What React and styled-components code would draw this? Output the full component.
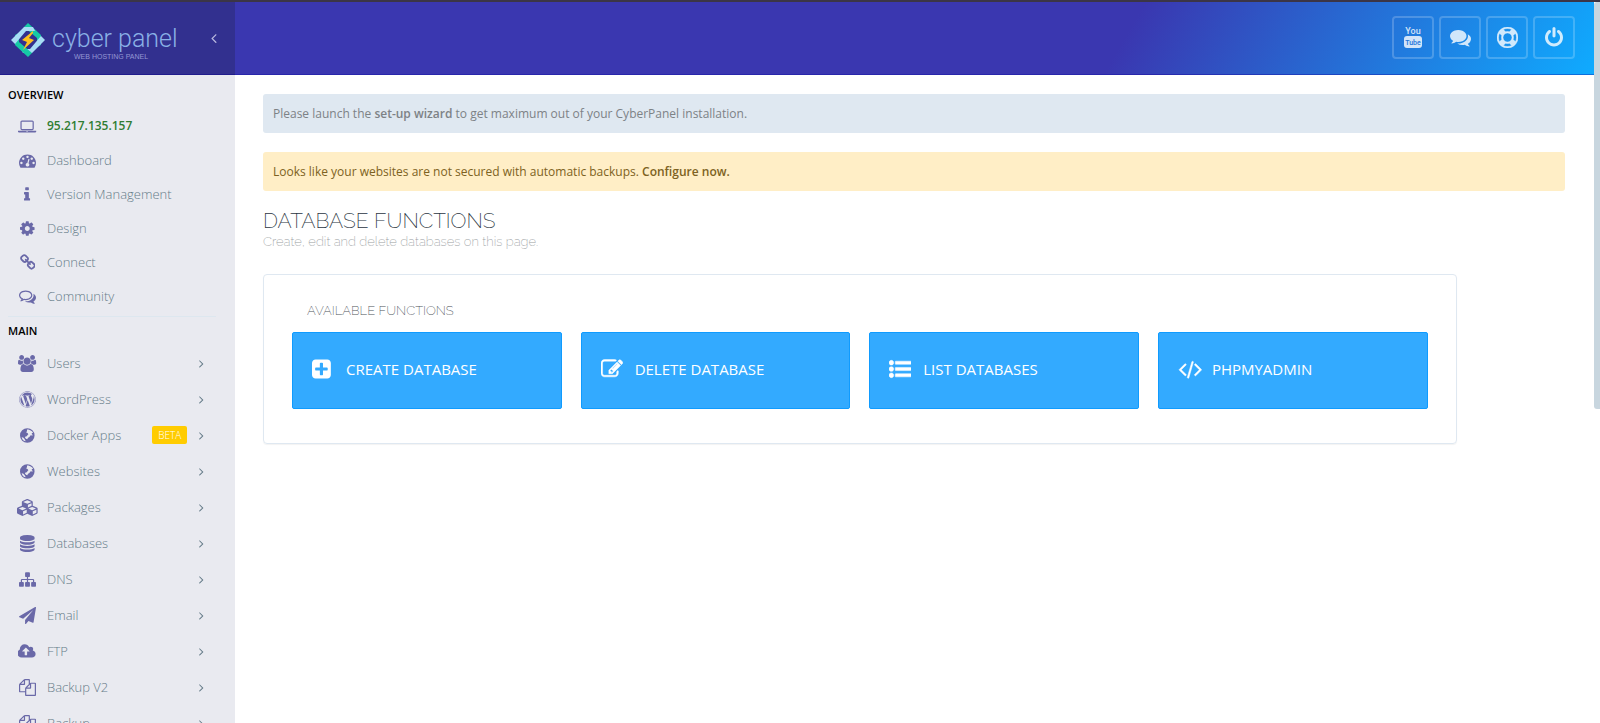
/** @format */

import React from "react";
import styled, { createGlobalStyle } from "styled-components";
import { FaWordpress } from "react-icons/fa";

// [min x, width, path], all glyphs are 1792 units high
const glyphs = {
	laptop: [
		0,
		1920,
		"M416 1280q-66 0-113-47t-47-113v-704q0-66 47-113t113-47h1088q66 0 113 47t47 113v704q0 66-47 113t-113 47h-1088zm-32-864v704q0 13 9.5 22.5t22.5 9.5h1088q13 0 22.5-9.5t9.5-22.5v-704q0-13-9.5-22.5t-22.5-9.5h-1088q-13 0-22.5 9.5t-9.5 22.5zm1376 928h160v96q0 40-47 68t-113 28h-1600q-66 0-113-28t-47-68v-96h1760zm-720 96q16 0 16-16t-16-16h-160q-16 0-16 16t16 16h160z",
	],
	dashboard: [
		0,
		1792,
		"M384 1152q0-53-37.5-90.5t-90.5-37.5-90.5 37.5-37.5 90.5 37.5 90.5 90.5 37.5 90.5-37.5 37.5-90.5zm192-448q0-53-37.5-90.5t-90.5-37.5-90.5 37.5-37.5 90.5 37.5 90.5 90.5 37.5 90.5-37.5 37.5-90.5zm428 481l101-382q6-26-7.5-48.5t-38.5-29.5-48 6.5-30 39.5l-101 382q-60 5-107 43.5t-63 98.5q-20 77 20 146t117 89 146-20 89-117q16-60-6-117t-72-91zm660-33q0-53-37.5-90.5t-90.5-37.5-90.5 37.5-37.5 90.5 37.5 90.5 90.5 37.5 90.5-37.5 37.5-90.5zm-640-640q0-53-37.5-90.5t-90.5-37.5-90.5 37.5-37.5 90.5 37.5 90.5 90.5 37.5 90.5-37.5 37.5-90.5zm448 192q0-53-37.5-90.5t-90.5-37.5-90.5 37.5-37.5 90.5 37.5 90.5 90.5 37.5 90.5-37.5 37.5-90.5zm320 448q0 261-141 483-19 29-54 29h-1402q-35 0-54-29-141-221-141-483 0-182 71-348t191-286 286-191 348-71 348 71 286 191 191 286 71 348z",
	],
	info: [
		576,
		640,
		"M1216 1344v128q0 26-19 45t-45 19h-512q-26 0-45-19t-19-45v-128q0-26 19-45t45-19h64v-384h-64q-26 0-45-19t-19-45v-128q0-26 19-45t45-19h384q26 0 45 19t19 45v576h64q26 0 45 19t19 45zm-128-1152v192q0 26-19 45t-45 19h-256q-26 0-45-19t-19-45v-192q0-26 19-45t45-19h256q26 0 45 19t19 45z",
	],
	cog: [
		128,
		1536,
		"M1152 896q0-106-75-181t-181-75-181 75-75 181 75 181 181 75 181-75 75-181zm512-109v222q0 12-8 23t-20 13l-185 28q-19 54-39 91 35 50 107 138 10 12 10 25t-9 23q-27 37-99 108t-94 71q-12 0-26-9l-138-108q-44 23-91 38-16 136-29 186-7 28-36 28h-222q-14 0-24.5-8.5t-11.5-21.5l-28-184q-49-16-90-37l-141 107q-10 9-25 9-14 0-25-11-126-114-165-168-7-10-7-23 0-12 8-23 15-21 51-66.5t54-70.5q-27-50-41-99l-183-27q-13-2-21-12.5t-8-23.5v-222q0-12 8-23t19-13l186-28q14-46 39-92-40-57-107-138-10-12-10-24 0-10 9-23 26-36 98.5-107.5t94.5-71.5q13 0 26 10l138 107q44-23 91-38 16-136 29-186 7-28 36-28h222q14 0 24.5 8.5t11.5 21.5l28 184q49 16 90 37l142-107q9-9 24-9 13 0 25 10 129 119 165 170 7 8 7 22 0 12-8 23-15 21-51 66.5t-54 70.5q26 50 41 98l183 28q13 2 21 12.5t8 23.5z",
	],
	chain: [
		64,
		1664,
		"M1520 1216q0-40-28-68l-208-208q-28-28-68-28-42 0-72 32 3 3 19 18.5t21.5 21.5 15 19 13 25.5 3.5 27.5q0 40-28 68t-68 28q-15 0-27.5-3.5t-25.5-13-19-15-21.5-21.5-18.5-19q-33 31-33 73 0 40 28 68l206 207q27 27 68 27 40 0 68-26l147-146q28-28 28-67zm-703-705q0-40-28-68l-206-207q-28-28-68-28-39 0-68 27l-147 146q-28 28-28 67 0 40 28 68l208 208q27 27 68 27 42 0 72-31-3-3-19-18.5t-21.5-21.5-15-19-13-25.5-3.5-27.5q0-40 28-68t68-28q15 0 27.5 3.5t25.5 13 19 15 21.5 21.5 18.5 19q33-31 33-73zm895 705q0 120-85 203l-147 146q-83 83-203 83-121 0-204-85l-206-207q-83-83-83-203 0-123 88-209l-88-88q-86 88-208 88-120 0-204-84l-208-208q-84-84-84-204t85-203l147-146q83-83 203-83 121 0 204 85l206 207q83 83 83 203 0 123-88 209l88 88q86-88 208-88 120 0 204 84l208 208q84 84 84 204z",
	],
	commentsO: [
		0,
		1792,
		"M704 384q-153 0-286 52t-211.5 141-78.5 191q0 82 53 158t149 132l97 56-35 84q34-20 62-39l44-31 53 10q78 14 153 14 153 0 286-52t211.5-141 78.5-191-78.5-191-211.5-141-286-52zm0-128q191 0 353.5 68.5t256.5 186.5 94 257-94 257-256.5 186.5-353.5 68.5q-86 0-176-16-124 88-278 128-36 9-86 16h-3q-11 0-20.5-8t-11.5-21q-1-3-1-6.5t.5-6.5 2-6l2.5-5 3.5-5.5 4-5 4.5-5 4-4.5q5-6 23-25t26-29.5 22.5-29 25-38.5 20.5-44q-124-72-195-177t-71-224q0-139 94-257t256.5-186.5 353.5-68.5zm822 1169q10 24 20.5 44t25 38.5 22.5 29 26 29.5 23 25q1 1 4 4.5t4.5 5 4 5 3.5 5.5l2.5 5 2 6 .5 6.5-1 6.5q-3 14-13 22t-22 7q-50-7-86-16-154-40-278-128-90 16-176 16-271 0-472-132 58 4 88 4 161 0 309-45t264-129q125-92 192-212t67-254q0-77-23-152 129 71 204 178t75 230q0 120-71 224.5t-195 176.5z",
	],
	comments: [
		0,
		1792,
		"M1408 768q0 139-94 257t-256.5 186.5-353.5 68.5q-86 0-176-16-124 88-278 128-36 9-86 16h-3q-11 0-20.5-8t-11.5-21q-1-3-1-6.5t.5-6.5 2-6l2.5-5 3.5-5.5 4-5 4.5-5 4-4.5q5-6 23-25t26-29.5 22.5-29 25-38.5 20.5-44q-124-72-195-177t-71-224q0-139 94-257t256.5-186.5 353.5-68.5 353.5 68.5 256.5 186.5 94 257zm384 256q0 120-71 224.5t-195 176.5q10 24 20.5 44t25 38.5 22.5 29 26 29.5 23 25q1 1 4 4.5t4.5 5 4 5 3.5 5.5l2.5 5 2 6 .5 6.5-1 6.5q-3 14-13 22t-22 7q-50-7-86-16-154-40-278-128-90 16-176 16-271 0-472-132 58 4 88 4 161 0 309-45t264-129q125-92 192-212t67-254q0-77-23-152 129 71 204 178t75 230z",
	],
	users: [
		0,
		1920,
		"M593 896q-162 5-265 128h-134q-82 0-138-40.5t-56-118.5q0-353 124-353 6 0 43.5 21t97.5 42.5 119 21.5q67 0 133-23-5 37-5 66 0 143 81 256zm1071 637q0 120-73 189.5t-194 69.5h-874q-121 0-194-69.5t-73-189.5q0-53 3.5-103.5t14-109 26.5-108.5 43-97.5 62-81 85.5-53.5 111.5-20q10 0 43 21.5t73 48 107 48 135 21.5 135-21.5 107-48 73-48 43-21.5q61 0 111.5 20t85.5 53.5 62 81 43 97.5 26.5 108.5 14 109 3.5 103.5zm-1024-1277q0 106-75 181t-181 75-181-75-75-181 75-181 181-75 181 75 75 181zm704 384q0 159-112.5 271.5t-271.5 112.5-271.5-112.5-112.5-271.5 112.5-271.5 271.5-112.5 271.5 112.5 112.5 271.5zm576 225q0 78-56 118.5t-138 40.5h-134q-103-123-265-128 81-113 81-256 0-29-5-66 66 23 133 23 59 0 119-21.5t97.5-42.5 43.5-21q124 0 124 353zm-128-609q0 106-75 181t-181 75-181-75-75-181 75-181 181-75 181 75 75 181z",
	],
	globe: [
		128,
		1536,
		"M896 128a768 768 0 1 0 0 1536a768 768 0 1 0 0-1536zM860 250l150 20 200 60 210 140 90 170-110-20-50 110 110 90-30 110-130-60-110 40-60 140-150 90-90 150-130-40-110-150 60-110 130-20 90-120 80-90-90-130-140-40 90-160zM300 1080l150 40 140 110 120 210-20 60-160-60-150-160z",
	],
	cubes: [
		0,
		2304,
		"M640 1632l384-192v-314l-384 164v342zm-64-454l404-173-404-173-404 173zm1088 454l384-192v-314l-384 164v342zm-64-454l404-173-404-173-404 173zm-448-293l384-165v-266l-384 164v267zm-64-379l441-189-441-189-441 189zm1088 518v416q0 36-19 67t-52 47l-448 224q-25 14-57 14t-57-14l-448-224q-4-2-7-4-2 2-7 4l-448 224q-25 14-57 14t-57-14l-448-224q-33-16-52-47t-19-67v-416q0-38 21.5-70t56.5-48l434-186v-400q0-38 21.5-70t56.5-48l448-192q23-10 50-10t50 10l448 192q35 16 56.5 48t21.5 70v400l434 186q36 16 57 48t21 70z",
	],
	database: [
		128,
		1536,
		"M896 768q237 0 443-43t325-127v170q0 69-103 128t-280 93.5-385 34.5-385-34.5-280-93.5-103-128v-170q119 84 325 127t443 43zm0 768q237 0 443-43t325-127v170q0 69-103 128t-280 93.5-385 34.5-385-34.5-280-93.5-103-128v-170q119 84 325 127t443 43zm0-384q237 0 443-43t325-127v170q0 69-103 128t-280 93.5-385 34.5-385-34.5-280-93.5-103-128v-170q119 84 325 127t443 43zm0-1152q208 0 385 34.5t280 93.5 103 128v128q0 69-103 128t-280 93.5-385 34.5-385-34.5-280-93.5-103-128v-128q0-69 103-128t280-93.5 385-34.5z",
	],
	sitemap: [
		0,
		1792,
		"M1792 1248v320q0 40-28 68t-68 28h-320q-40 0-68-28t-28-68v-320q0-40 28-68t68-28h96v-192h-512v192h96q40 0 68 28t28 68v320q0 40-28 68t-68 28h-320q-40 0-68-28t-28-68v-320q0-40 28-68t68-28h96v-192h-512v192h96q40 0 68 28t28 68v320q0 40-28 68t-68 28h-320q-40 0-68-28t-28-68v-320q0-40 28-68t68-28h96v-192q0-52 38-90t90-38h512v-192h-96q-40 0-68-28t-28-68v-320q0-40 28-68t68-28h320q40 0 68 28t28 68v320q0 40-28 68t-68 28h-96v192h512q52 0 90 38t38 90v192h96q40 0 68 28t28 68z",
	],
	plane: [
		0,
		1792,
		"M1764 11q33 24 27 64l-256 1536q-5 29-32 45-14 8-31 8-11 0-24-5l-453-185-242 295q-18 23-49 23-13 0-22-4-19-7-30.5-23.5t-11.5-36.5v-349l864-1059-1069 925-395-162q-37-14-40-55-2-40 32-59l1664-960q15-9 32-9 20 0 36 11z",
	],
	cloud: [
		0,
		1920,
		"M1216 864q0-14-9-23l-352-352q-9-9-23-9t-23 9l-351 351q-10 12-10 24 0 14 9 23t23 9h224v352q0 13 9.5 22.5t22.5 9.5h192q13 0 22.5-9.5t9.5-22.5v-352h224q13 0 22.5-9.5t9.5-22.5zm640 288q0 159-112.5 271.5t-271.5 112.5h-1088q-185 0-316.5-131.5t-131.5-316.5q0-130 70-240t188-165q-2-30-2-43 0-212 150-362t362-150q156 0 285.5 87t188.5 231q71-62 166-62 106 0 181 75t75 181q0 76-41 138 130 31 213.5 135.5t83.5 238.5z",
	],
	files: [
		0,
		1792,
		"M1696 384q40 0 68 28t28 68v1216q0 40-28 68t-68 28h-960q-40 0-68-28t-28-68v-288h-544q-40 0-68-28t-28-68v-672q0-40 20-88t48-76l408-408q28-28 76-48t88-20h416q40 0 68 28t28 68v328q68-40 128-40h416zm-544 213l-299 299h299v-299zm-640-384l-299 299h299v-299zm196 647l316-316v-416h-384v416q0 40-28 68t-68 28h-416v640h512v-256q0-40 20-88t48-76zm956 804v-1152h-384v416q0 40-28 68t-68 28h-416v640h896z",
	],
	angle: [
		0,
		640,
		"M595 960q0 13-10 23l-466 466q-10 10-23 10t-23-10l-50-50q-10-10-10-23t10-23l393-393-393-393q-10-10-10-23t10-23l50-50q10-10 23-10t23 10l466 466q10 10 10 23z",
	],
	angleLeft: [
		0,
		640,
		"M45 960q0 13 10 23l466 466q10 10 23 10t23-10l50-50q10-10 10-23t-10-23l-393-393 393-393q10-10 10-23t-10-23l-50-50q-10-10-23-10t-23 10l-466 466q-10 10-10 23z",
	],
	ring: [
		0,
		1792,
		"M896 0q182 0 348 71t286 191 191 286 71 348-71 348-191 286-286 191-348 71-348-71-286-191-191-286-71-348 71-348 191-286 286-191 348-71zm0 128q-190 0-361 90l194 194q82-28 167-28t167 28l194-194q-171-90-361-90zm-678 1129l194-194q-28-82-28-167t28-167l-194-194q-90 171-90 361t90 361zm678 407q190 0 361-90l-194-194q-82 28-167 28t-167-28l-194 194q171 90 361 90zm0-384q159 0 271.5-112.5t112.5-271.5-112.5-271.5-271.5-112.5-271.5 112.5-112.5 271.5 112.5 271.5 271.5 112.5zm484-217l194 194q90-171 90-361t-90-361l-194 194q28 82 28 167t-28 167z",
	],
	power: [
		128,
		1536,
		"M1664 896q0 156-61 298t-164 245-245 164-298 61-298-61-245-164-164-245-61-298q0-182 80.5-343t226.5-270q43-32 95.5-25t83.5 50q32 42 24.5 94.5t-49.5 84.5q-98 74-151.5 181t-53.5 228q0 104 40.5 198.5t109.5 163.5 163.5 109.5 198.5 40.5 198.5-40.5 163.5-109.5 109.5-163.5 40.5-198.5q0-121-53.5-228t-151.5-181q-42-32-49.5-84.5t24.5-94.5q31-43 84-50t95 25q146 109 226.5 270t80.5 343zm-640-768v640q0 52-38 90t-90 38-90-38-38-90v-640q0-52 38-90t90-38 90 38 38 90z",
	],
	plus: [
		128,
		1536,
		"M1408 960v-128q0-26-19-45t-45-19h-320v-320q0-26-19-45t-45-19h-128q-26 0-45 19t-19 45v320h-320q-26 0-45 19t-19 45v128q0 26 19 45t45 19h320v320q0 26 19 45t45 19h128q26 0 45-19t19-45v-320h320q26 0 45-19t19-45zm256-544v960q0 119-84.5 203.5t-203.5 84.5h-960q-119 0-203.5-84.5t-84.5-203.5v-960q0-119 84.5-203.5t203.5-84.5h960q119 0 203.5 84.5t84.5 203.5z",
	],
	edit: [
		0,
		1792,
		"M888 1184l116-116-152-152-116 116v56h96v96h56zm440-720q-16-16-33 1l-350 350q-17 17-1 33t33-1l350-350q17-17 1-33zm80 594v190q0 119-84.5 203.5t-203.5 84.5h-832q-119 0-203.5-84.5t-84.5-203.5v-832q0-119 84.5-203.5t203.5-84.5h832q63 0 117 25 15 7 18 23 3 17-9 29l-49 49q-14 14-32 8-23-6-45-6h-832q-66 0-113 47t-47 113v832q0 66 47 113t113 47h832q66 0 113-47t47-113v-126q0-13 9-22l64-64q15-15 35-7t20 29zm-96-738l288 288-672 672h-288v-288zm444 132l-92 92-288-288 92-92q28-28 68-28t68 28l152 152q28 28 28 68t-28 68z",
	],
	list: [
		0,
		1792,
		"M384 1408q0 80-56 136t-136 56-136-56-56-136 56-136 136-56 136 56 56 136zm0-512q0 80-56 136t-136 56-136-56-56-136 56-136 136-56 136 56 56 136zm1408 416v192q0 13-9.5 22.5t-22.5 9.5h-1216q-13 0-22.5-9.5t-9.5-22.5v-192q0-13 9.5-22.5t22.5-9.5h1216q13 0 22.5 9.5t9.5 22.5zm-1408-928q0 80-56 136t-136 56-136-56-56-136 56-136 136-56 136 56 56 136zm1408 416v192q0 13-9.5 22.5t-22.5 9.5h-1216q-13 0-22.5-9.5t-9.5-22.5v-192q0-13 9.5-22.5t22.5-9.5h1216q13 0 22.5 9.5t9.5 22.5zm0-512v192q0 13-9.5 22.5t-22.5 9.5h-1216q-13 0-22.5-9.5t-9.5-22.5v-192q0-13 9.5-22.5t22.5-9.5h1216q13 0 22.5 9.5t9.5 22.5z",
	],
	code: [
		-110,
		1960,
		"M553 1399l-50 50q-10 10-23 10t-23-10l-466-466q-10-10-10-23t10-23l466-466q10-10 23-10t23 10l50 50q10 10 10 23t-10 23l-393 393 393 393q10 10 10 23t-10 23zm591-1067l-373 1291q-4 13-15.5 19.5t-23.5 2.5l-62-17q-13-4-19.5-15.5t-2.5-24.5l373-1291q4-13 15.5-19.5t23.5-2.5l62 17q13 4 19.5 15.5t2.5 24.5zm657 651l-466 466q-10 10-23 10t-23-10l-50-50q-10-10-10-23t10-23l393-393-393-393q-10-10-10-23t10-23l50-50q10-10 23-10t23 10l466 466q10 10 10 23t-10 23z",
	],
};

const overviewLinks = [
	{ label: "95.217.135.157", icon: "laptop", server: true },
	{ label: "Dashboard", icon: "dashboard" },
	{ label: "Version Management", icon: "info" },
	{ label: "Design", icon: "cog" },
	{ label: "Connect", icon: "chain" },
	{ label: "Community", icon: "commentsO" },
];

const mainLinks = [
	{ label: "Users", icon: "users" },
	{ label: "WordPress", icon: "wordpress" },
	{ label: "Docker Apps", icon: "globe", badge: "BETA" },
	{ label: "Websites", icon: "globe" },
	{ label: "Packages", icon: "cubes" },
	{ label: "Databases", icon: "database" },
	{ label: "DNS", icon: "sitemap" },
	{ label: "Email", icon: "plane" },
	{ label: "FTP", icon: "cloud" },
	{ label: "Backup V2", icon: "files" },
	{ label: "Backup", icon: "files" },
];

const functions = [
	{ label: "Create Database", icon: "plus" },
	{ label: "Delete Database", icon: "edit" },
	{ label: "List Databases", icon: "list" },
	{ label: "PHPMyAdmin", icon: "code" },
];

const Icon = ({ name, size = 17, stroke = 0 }) => {
	if (name === "wordpress") {
		return <FaWordpress size={size} aria-hidden='true' />;
	}
	const [x, width, d] = glyphs[name];
	return (
		<svg
			width={(width / 1792) * size}
			height={size}
			viewBox={`${x} 0 ${width} 1792`}
			fill='currentColor'
			stroke='currentColor'
			strokeWidth={stroke}
			fillRule={name === "globe" ? "evenodd" : "nonzero"}
			aria-hidden='true'>
			<path d={d} />
		</svg>
	);
};

const YoutubeIcon = () => (
	<svg width='22' height='24' viewBox='0 0 22 24' aria-hidden='true'>
		<g fontFamily='Roboto, sans-serif' fontWeight='500' textAnchor='middle'>
			<text x='11' y='9' fontSize='9' fill='currentColor'>
				You
			</text>
			<rect x='2' y='11' width='18' height='12' rx='3' fill='currentColor' />
			<text x='11' y='20' fontSize='7' fill='#2074da'>
				Tube
			</text>
		</g>
	</svg>
);

const LogoMark = () => (
	<svg width='34' height='34' viewBox='0 0 34 34' aria-hidden='true'>
		<path fill='#16c9a6' d='M17 0l13 12v10l-4 2V15L13 4z' />
		<path fill='#a8dcf6' d='M34 17L21 30l-9 0-2-4h9L30 13z' />
		<path fill='#16c9a6' d='M17 34L4 22V12l4-2v9l13 11z' />
		<path fill='#a8dcf6' d='M0 17L13 4h9l2 4h-9L4 21z' />
		<path fill='#fdc01e' d='M22 8l-11 9 5 2-4 8 11-10-5-2 4-5z' />
	</svg>
);

const App = () => {
	return (
		<Page>
			<GlobalStyle />
			<TopStrip />
			<Shell>
				<Sidebar>
					<Brand>
						<BrandLink href='#home'>
							<LogoMark />
							<BrandText>
								<BrandName>cyber panel</BrandName>
								<BrandTag>WEB HOSTING PANEL</BrandTag>
							</BrandText>
						</BrandLink>
						<CollapseButton type='button' aria-label='Collapse menu'>
							<Icon name='angleLeft' size={16} />
						</CollapseButton>
					</Brand>
					<Nav>
						<NavHeader>Overview</NavHeader>
						<NavList>
							{overviewLinks.map((l) => (
								<li key={l.label}>
									<NavLink href='#overview' $height={34} $server={l.server}>
										<NavIcon>
											<Icon name={l.icon} />
										</NavIcon>
										<NavLabel>{l.label}</NavLabel>
									</NavLink>
								</li>
							))}
						</NavList>
						<Divider />
						<NavHeader>Main</NavHeader>
						<NavList>
							{mainLinks.map((l) => (
								<li key={l.label}>
									<NavLink href='#main' $height={36}>
										<NavIcon>
											<Icon name={l.icon} />
										</NavIcon>
										<NavLabel>{l.label}</NavLabel>
										{l.badge && <Badge>{l.badge}</Badge>}
										<Icon name='angle' size={13} />
									</NavLink>
								</li>
							))}
						</NavList>
					</Nav>
				</Sidebar>

				<Main>
					<Header>
						<HeaderButton type='button' aria-label='YouTube'>
							<YoutubeIcon />
						</HeaderButton>
						<HeaderButton type='button' aria-label='Forums'>
							<Icon name='comments' size={21} />
						</HeaderButton>
						<HeaderButton type='button' aria-label='Support'>
							<Icon name='ring' size={21} stroke={40} />
						</HeaderButton>
						<HeaderButton type='button' aria-label='Log out'>
							<Icon name='power' size={21} />
						</HeaderButton>
					</Header>
					<Content>
						<Alert $bg='#dfe8f1' $color='#7d8286'>
							Please launch the <AlertLink href='#wizard'>set-up wizard</AlertLink>{" "}
							to get maximum out of your CyberPanel installation.
						</Alert>
						<Alert $bg='#ffeec6' $color='#7d6222'>
							Looks like your websites are not secured with automatic backups.{" "}
							<AlertLink href='#backups'>Configure now.</AlertLink>
						</Alert>
						<PageTitle>Database Functions</PageTitle>
						<PageText>Create, edit and delete databases on this page.</PageText>
						<Panel>
							<PanelTitle>Available Functions</PanelTitle>
							<Tiles>
								{functions.map((f) => (
									<Tile key={f.label} href='#databases'>
										<TileIcon>
											<Icon name={f.icon} size={22} stroke={f.icon === "plus" ? 0 : 40} />
										</TileIcon>
										{f.label}
									</Tile>
								))}
							</Tiles>
						</Panel>
					</Content>
				</Main>
				<ScrollTrack>
					<ScrollThumb />
				</ScrollTrack>
			</Shell>
		</Page>
	);
};

export default App;

const GlobalStyle = createGlobalStyle`
	* {
		box-sizing: border-box;
	}

	body {
		margin: 0;
		background: #fff;
		font-family: "Open Sans", sans-serif;
		font-size: 13px;
		line-height: 20px;
	}
`;

const Page = styled.div`
	display: flex;
	flex-direction: column;
	height: 100vh;
	overflow: hidden;
`;

const TopStrip = styled.div`
	flex: none;
	height: 2px;
	background: #3b3547;
`;

const Shell = styled.div`
	display: flex;
	flex: 1;
	min-height: 0;
`;

const Sidebar = styled.aside`
	display: flex;
	flex-direction: column;
	flex: none;
	width: 235px;
	background: #e9eaf0;
`;

const Brand = styled.div`
	display: flex;
	flex: none;
	align-items: center;
	justify-content: space-between;
	height: 73px;
	padding: 0 14px 0 11px;
	background: #32308f;
	border-bottom: 1px solid #201c8c;
`;

const BrandLink = styled.a`
	display: flex;
	align-items: center;
	gap: 7px;
	padding-top: 4px;
	text-decoration: none;
`;

const BrandText = styled.span`
	display: flex;
	flex-direction: column;
	padding-top: 6px;
`;

const BrandName = styled.span`
	color: #8ab0e6;
	font-family: Roboto, sans-serif;
	font-size: 25px;
	font-weight: 300;
	line-height: 28px;
`;

const BrandTag = styled.span`
	padding-left: 22px;
	color: #9497d4;
	font-family: "Liberation Sans", sans-serif;
	font-size: 7px;
	line-height: 8px;
`;

const CollapseButton = styled.button`
	display: flex;
	padding: 4px;
	border: 0;
	background: none;
	color: #b9b8df;
	cursor: pointer;
`;

const Nav = styled.nav`
	flex: 1;
	min-height: 0;
	overflow: hidden;
	padding: 10px 19px 0 8px;
`;

const NavHeader = styled.h2`
	margin: 0;
	color: #000;
	font-size: 11px;
	font-weight: 600;
	line-height: 20px;
	text-transform: uppercase;
`;

const NavList = styled.ul`
	margin: 0;
	padding: 4px 0 0;
	list-style: none;
`;

const NavLink = styled.a`
	display: flex;
	align-items: center;
	height: ${(p) => p.$height}px;
	padding-right: 12px;
	color: ${(p) => (p.$server ? "#2f7d32" : "#667c89")};
	font-size: ${(p) => (p.$server ? 12 : 13)}px;
	font-weight: ${(p) => (p.$server ? 600 : 300)};
	text-decoration: none;
`;

const NavIcon = styled.span`
	display: flex;
	justify-content: center;
	width: 39px;
	color: #6a69a8;
`;

const NavLabel = styled.span`
	flex: 1;
`;

const Badge = styled.span`
	margin-right: 12px;
	padding: 0 6px;
	border-radius: 2px;
	background: #fc0;
	color: #fff;
	font-size: 10px;
	line-height: 18px;
`;

const Divider = styled.hr`
	height: 1px;
	margin: 3px 0 4px;
	border: 0;
	background: #dde7ef;
`;

const Main = styled.div`
	display: flex;
	flex: 1;
	flex-direction: column;
	min-width: 0;
`;

const Header = styled.header`
	display: flex;
	flex: none;
	align-items: center;
	justify-content: flex-end;
	gap: 5px;
	height: 73px;
	padding: 0 19px 2px;
	background: linear-gradient(120deg, #3a37b0 65%, #0fabff 100%);
	border-bottom: 1px solid rgba(0, 0, 160, 0.3);
`;

const HeaderButton = styled.button`
	display: flex;
	align-items: center;
	justify-content: center;
	width: 42px;
	height: 43px;
	padding: 0;
	border: 2px solid rgba(255, 255, 255, 0.2);
	border-radius: 4px;
	background: none;
	color: rgba(255, 255, 255, 0.8);
	cursor: pointer;
`;

const Content = styled.main`
	padding: 19px 29px 0 28px;
`;

const Alert = styled.div`
	margin-bottom: 19px;
	padding: 10px;
	border-radius: 3px;
	background: ${(p) => p.$bg};
	color: ${(p) => p.$color};
	font-size: 12px;
	line-height: 19px;
`;

const AlertLink = styled.a`
	color: inherit;
	font-weight: 600;
	text-decoration: none;
`;

const PageTitle = styled.h1`
	margin: 0;
	color: #2b3542;
	font-family: Raleway, Lato, sans-serif;
	font-size: 21px;
	font-weight: 200;
	line-height: 22px;
	text-transform: uppercase;
`;

const PageText = styled.p`
	margin: 0 0 22px;
	color: #999da1;
	font-family: Raleway, Lato, sans-serif;
	font-size: 13px;
	font-weight: 200;
	line-height: 20px;
`;

const Panel = styled.section`
	width: 91.6667%;
	padding: 25px 28px 34px;
	border: 1px solid #dfe8f1;
	border-radius: 4px;
	box-shadow: 0 1px 1px rgba(0, 0, 0, 0.05);
`;

const PanelTitle = styled.h3`
	margin: 0 0 11px 15px;
	color: #4d5359;
	font-family: Raleway, Lato, sans-serif;
	font-size: 13px;
	font-weight: 200;
	line-height: 21px;
	text-transform: uppercase;
`;

const Tiles = styled.div`
	display: grid;
	grid-template-columns: repeat(4, 1fr);
	gap: 19px;
`;

const Tile = styled.a`
	display: flex;
	align-items: center;
	height: 77px;
	padding: 0 0 3px 19px;
	border: 1px solid #0f9bff;
	border-radius: 2px;
	background: #3af;
	color: #fff;
	font-size: 15px;
	text-decoration: none;
	text-transform: uppercase;
`;

const TileIcon = styled.span`
	display: flex;
	width: 34px;
`;

const ScrollTrack = styled.div`
	flex: none;
	width: 6px;
	background: #fff;
`;

const ScrollThumb = styled.div`
	height: 56.5%;
	border-radius: 3px 0 0 3px;
	background: #c8d6df;
`;
